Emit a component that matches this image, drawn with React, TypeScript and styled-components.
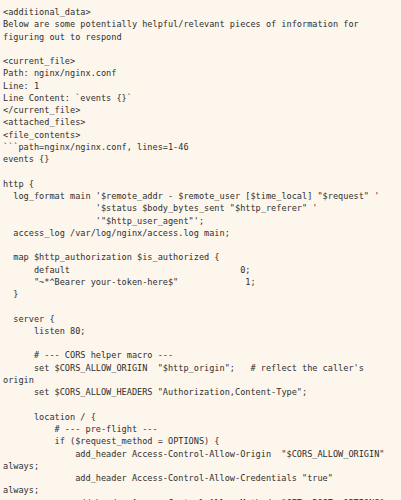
import React from "react";
import styled, { createGlobalStyle } from "styled-components";

const GlobalStyle = createGlobalStyle`
  html, body {
    margin: 0;
    padding: 0;
    background: #fdf6ec;
  }
  body {
    font-family: "DejaVu Sans Mono", "Liberation Mono", monospace;
  }
`;

const Page = styled.main`
  box-sizing: border-box;
  width: 401px;
  height: 500px;
  overflow: hidden;
  background: #fdf6ec;
  padding: 6px 0 0 3px;
`;

const CodeBlock = styled.pre`
  margin: 0;
  width: 388px;
  font-family: "DejaVu Sans Mono", "Liberation Mono", monospace;
  font-size: 8.57px;
  line-height: 12.27px;
  color: #2e2e2e;
  white-space: pre-wrap;
  word-break: normal;
  overflow-wrap: normal;
`;

const lines: string[] = [
  "<additional_data>",
  "Below are some potentially helpful/relevant pieces of information for figuring out to respond",
  "",
  "<current_file>",
  "Path: nginx/nginx.conf",
  "Line: 1",
  "Line Content: `events {}`",
  "</current_file>",
  "<attached_files>",
  "<file_contents>",
  "```path=nginx/nginx.conf, lines=1-46",
  "events {}",
  "",
  "http {",
  "  log_format main '$remote_addr - $remote_user [$time_local] \"$request\" '",
  "                  '$status $body_bytes_sent \"$http_referer\" '",
  "                  '\"$http_user_agent\"';",
  "  access_log /var/log/nginx/access.log main;",
  "",
  "  map $http_authorization $is_authorized {",
  "      default                                 0;",
  "      \"~*^Bearer your-token-here$\"             1;",
  "  }",
  "",
  "  server {",
  "      listen 80;",
  "",
  "      # --- CORS helper macro ---",
  "      set $CORS_ALLOW_ORIGIN  \"$http_origin\";   # reflect the caller's origin",
  "      set $CORS_ALLOW_HEADERS \"Authorization,Content-Type\";",
  "",
  "      location / {",
  "          # --- pre-flight ---",
  "          if ($request_method = OPTIONS) {",
  "              add_header Access-Control-Allow-Origin  \"$CORS_ALLOW_ORIGIN\" always;",
  "              add_header Access-Control-Allow-Credentials \"true\"            always;",
  "              add_header Access-Control-Allow-Methods \"GET, POST, OPTIONS\" always;",
  "              add_header Access-Control-Allow-Headers \"$CORS_ALLOW_HEADERS\" always;",
];

export default function App() {
  return (
    <>
      <GlobalStyle />
      <Page>
        <CodeBlock>{lines.join("\n")}</CodeBlock>
      </Page>
    </>
  );
}
